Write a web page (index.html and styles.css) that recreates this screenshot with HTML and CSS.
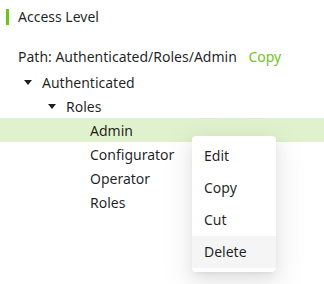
FILE: index.html
```html
<!DOCTYPE html>
<html lang="en">
<head>
    <meta charset="UTF-8">
    <title>Access Level</title>
    <link rel="stylesheet" href="styles.css">
</head>
<body>
    <div class="panel">
        <h3 class="title">Access Level</h3>
        <p class="path">Path: Authenticated/Roles/Admin <a class="copy">Copy</a></p>
        <ul class="tree">
            <li class="node lv0"><span class="switcher"><i class="caret"></i></span>Authenticated</li>
            <li class="node lv1"><span class="switcher"><i class="caret"></i></span>Roles</li>
            <li class="node lv2 selected"><span class="switcher"></span>Admin</li>
            <li class="node lv2"><span class="switcher"></span>Configurator</li>
            <li class="node lv2"><span class="switcher"></span>Operator</li>
            <li class="node lv2"><span class="switcher"></span>Roles</li>
        </ul>
        <ul class="menu">
            <li>Edit</li>
            <li>Copy</li>
            <li>Cut</li>
            <li class="hover">Delete</li>
        </ul>
    </div>
</body>
</html>
```

FILE: styles.css
```css
html, body{
    height: 100%;
}
body{
    margin: 0;
    font-family: "Noto Sans", "Open Sans", sans-serif;
    font-size: 14px;
    color: rgba(0, 0, 0, 0.88);
    background-color: #fff;
}
.panel{
    position: relative;
    min-height: 284px;
    box-sizing: border-box;
    padding-top: 9px;
}
.title{
    margin: 0 0 0 6px;
    padding-left: 9px;
    border-left: 3px solid #6cc417;
    font-size: 14px;
    font-weight: normal;
    line-height: 16px;
}
.path{
    margin: 20px 0 0 18px;
    line-height: 24px;
}
.copy{
    margin-left: 8px;
    color: #73c41d;
}
.tree{
    list-style: none;
    margin: 1px 0 0;
    padding: 0;
}
.node{
    display: flex;
    align-items: center;
    height: 24px;
    padding-left: 18px;
}
.lv1{
    padding-left: 42px;
}
.lv2{
    padding-left: 66px;
}
.selected{
    background-color: #e0f2cd;
}
.switcher{
    display: flex;
    align-items: center;
    justify-content: center;
    width: 20px;
    margin-right: 4px;
}
.caret{
    width: 0;
    height: 0;
    border-left: 4px solid transparent;
    border-right: 4px solid transparent;
    border-top: 5px solid rgba(0, 0, 0, 0.88);
}
.menu{
    position: absolute;
    left: 192px;
    top: 136px;
    width: 84px;
    margin: 0;
    padding: 4px 0;
    list-style: none;
    background-color: #fff;
    border-radius: 4px;
    box-shadow: 0 6px 16px 0 rgba(0, 0, 0, 0.08), 0 3px 6px -4px rgba(0, 0, 0, 0.12), 0 9px 28px 8px rgba(0, 0, 0, 0.05);
}
.menu li{
    height: 32px;
    line-height: 32px;
    padding-left: 12px;
}
.menu .hover{
    background-color: #f5f5f5;
}
```
